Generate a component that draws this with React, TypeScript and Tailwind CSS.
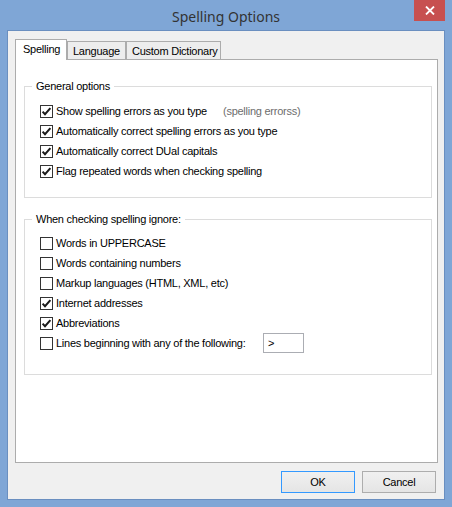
import type { ReactNode } from "react"

const ui = "font-['Liberation_Sans',Arial,sans-serif] text-[11px] leading-[13px] tracking-[-0.25px] text-black"

function Check({ checked }: { checked: boolean }) {
  return (
    <span className="flex h-[13px] w-[13px] shrink-0 items-center justify-center border border-[#333333] bg-white">
      {checked && (
        <svg width="11" height="11" viewBox="0 0 11 11">
          <path d="M1.6 5.6 L4 8.2 L9.4 2.2" fill="none" stroke="#1a1a1a" strokeWidth="2" />
        </svg>
      )}
    </span>
  )
}

function Row({ checked, children }: { checked: boolean; children: ReactNode }) {
  return (
    <div className="flex h-[20px] items-center gap-[3px] whitespace-nowrap">
      <Check checked={checked} />
      {children}
    </div>
  )
}

function Group({ label, className, children }: { label: string; className: string; children: ReactNode }) {
  return (
    <div className={`relative border border-[#dcdcdc] pl-[15px] ${className}`}>
      <span className="absolute top-[-7px] left-[7px] bg-white px-[4px]">{label}</span>
      {children}
    </div>
  )
}

export default function App() {
  return (
    <div className={`flex h-[507px] w-[452px] flex-col bg-[#7fa6d6] ${ui}`}>
      <div className="relative flex h-[30px] shrink-0 items-center justify-center">
        <span className="mt-[2px] font-['Noto_Sans',sans-serif] text-[14px] tracking-normal text-[#333333]">Spelling Options</span>
        <div className="absolute top-0 right-[7px] flex h-[21px] w-[31px] items-center justify-center bg-[#c75050]">
          <svg width="10" height="9" viewBox="0 0 10 9">
            <path d="M1 0.5 L9 8.5 M9 0.5 L1 8.5" stroke="#ffffff" strokeWidth="1.8" />
          </svg>
        </div>
      </div>

      <div className="ml-[7px] flex h-[470px] w-[438px] flex-col border border-[#6a8fc0] bg-[#f0f0f0] pt-[8px] pr-[7px] pl-[7px]">
        <div className="relative z-10 flex h-[20px] items-end whitespace-nowrap">
          <div className="mb-[-1px] flex h-[21px] w-[52px] items-start border border-b-0 border-[#acacac] bg-white pt-[3px] pl-[7px]">
            Spelling
          </div>
          <div className="flex h-[18px] w-[59px] items-center border border-b-0 border-[#acacac] bg-[#ededed] pt-[1px] pl-[5px]">
            Language
          </div>
          <div className="flex h-[18px] w-[95px] items-center border border-b-0 border-[#acacac] bg-[#ededed] pt-[1px] pl-[5px]">
            Custom Dictionary
          </div>
        </div>

        <div className="flex h-[404px] w-[423px] flex-col border border-[#acacac] bg-white pt-[26px] pl-[8px]">
          <Group label="General options" className="h-[112px] w-[408px] pt-[14px]">
            <Row checked>
              <span>Show spelling errors as you type</span>
              <span className="ml-[13px] text-[#6d6d6d]">(spelling errorss)</span>
            </Row>
            <Row checked>Automatically correct spelling errors as you type</Row>
            <Row checked>Automatically correct DUal capitals</Row>
            <Row checked>Flag repeated words when checking spelling</Row>
          </Group>

          <Group label="When checking spelling ignore:" className="mt-[21px] h-[156px] w-[408px] pt-[13px]">
            <Row checked={false}>Words in UPPERCASE</Row>
            <Row checked={false}>Words containing numbers</Row>
            <Row checked={false}>Markup languages (HTML, XML, etc)</Row>
            <Row checked>Internet addresses</Row>
            <Row checked>Abbreviations</Row>
            <Row checked={false}>
              <span className="w-[204px]">Lines beginning with any of the following:</span>
              <span className="flex h-[20px] w-[41px] items-center border border-[#abadb3] bg-white pl-[4px]">&gt;</span>
            </Row>
          </Group>
        </div>

        <div className="mt-[8px] flex justify-end gap-[7px] pr-[1px]">
          <button className="flex h-[22px] w-[74px] items-center justify-center border border-[#3399ff] bg-gradient-to-b from-[#f0f0f0] to-[#e5e5e5]">
            OK
          </button>
          <button className="flex h-[22px] w-[74px] items-center justify-center border border-[#adadad] bg-gradient-to-b from-[#f0f0f0] to-[#e5e5e5]">
            Cancel
          </button>
        </div>
      </div>
    </div>
  )
}
